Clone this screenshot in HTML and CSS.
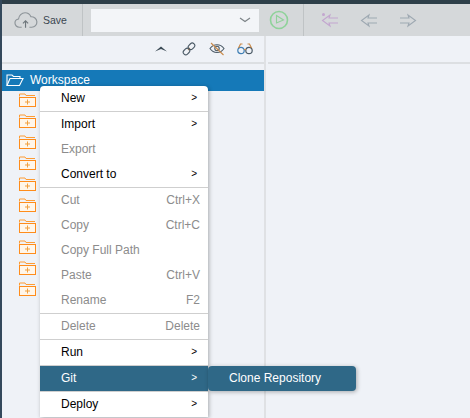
FILE: index.html
```html
<!DOCTYPE html>
<html>
    <head>
        <title>Workspace</title>
        <link rel="stylesheet" href="styles.css">
    </head>
    <body>
        <div class="topstrip"></div>
        <div class="toolbar">
            <div class="save">
                <svg class="cloud" width="25" height="18" viewBox="0 0 26 18" fill="none" stroke="#8d9499" stroke-width="1.2">
                    <path d="M8 16.5H5.5C3 16.500 1 14.500 1 12.200C1 10 2.600 8.300 4.700 8C5 4.300 8 1.500 11.500 1.500C14.300 1.500 16.600 3.200 17.600 5.600C20.800 5.400 23.500 7.700 23.800 10.800C24 14 21.600 16.500 18.500 16.500H16"/>
                    <path d="M12 17V10M9.300 12.500L12 9.800L14.700 12.500" stroke="#6f777c"/>
                </svg>
                <span>Save</span>
            </div>
            <div class="picker">
                <svg width="12" height="6" viewBox="0 0 12 6" fill="none" stroke="#7d8488" stroke-width="1.2"><path d="M1 1L6 4.500L11 1"/></svg>
            </div>
            <svg class="run" width="20" height="20" viewBox="0 0 20 20" fill="none" stroke="#8fd29a">
                <circle cx="10" cy="10" r="8.500" stroke-width="1.600"/>
                <path d="M7.500 5.500L14.500 10L7.500 13V5.500Z" stroke-width="1.100"/>
            </svg>
            <div class="nav">
                <svg width="18" height="16" viewBox="0 0 18 16" fill="none" stroke="#c3a6cf" stroke-width="1.100">
                    <circle cx="2.500" cy="2.500" r="1.500" fill="#c3a6cf" stroke="none"/>
                    <path d="M17 6H8L9 3L1.500 8.500L9 14L8 11H17"/>
                </svg>
                <svg width="18" height="16" viewBox="0 0 18 16" fill="none" stroke="#9ea9b2" stroke-width="1.100">
                    <path d="M17 6H8L9 3L1.500 8.500L9 14L8 11H17"/>
                </svg>
                <svg width="18" height="16" viewBox="0 0 18 16" fill="none" stroke="#9ea9b2" stroke-width="1.100">
                    <path d="M1 6H10L9 3L16.500 8.500L9 14L10 11H1"/>
                </svg>
            </div>
        </div>
        <div class="main">
            <div class="leftpanel">
                <div class="treetools">
                    <svg class="collapse" width="12" height="6" viewBox="0 0 12 6" fill="#3b4a55"><path d="M0 5.500L6 0.500L12 5.500L6 3Z"/></svg>
                    <svg class="link" width="14" height="14" viewBox="0 0 14 14" fill="none" stroke="#4b5a66" stroke-width="1.100">
                        <path d="M6 8L8 6" stroke="#c98a4a"/>
                        <rect x="7" y="0.800" width="5" height="7" rx="2.400" transform="rotate(45 9.500 4.300)"/>
                        <rect x="2" y="6" width="5" height="7" rx="2.400" transform="rotate(45 4.500 9.500)"/>
                    </svg>
                    <svg width="16" height="14" viewBox="0 0 16 14" fill="none" stroke="#4b5a66" stroke-width="1.100">
                        <path d="M1 6.500C3 3.800 5.500 2.800 8 2.800C10.500 2.800 13 3.800 15 6.500C13 9.500 10.500 10.500 8 10.500C5.500 10.500 3 9.500 1 6.500Z"/>
                        <circle cx="8" cy="6.500" r="2.200"/>
                        <path d="M2 1L14.500 13" stroke="#c98a4a"/>
                    </svg>
                    <svg width="16" height="12" viewBox="0 0 16 12" fill="none" stroke="#4b5a66" stroke-width="1.200">
                        <circle cx="4" cy="7.500" r="3.200" stroke="#3f7fb5"/>
                        <circle cx="12" cy="7.500" r="3.200"/>
                        <path d="M7 6.500H9M1.500 5L3.500 1H5.500M14.500 5L12.500 1H10.500" stroke="#c98a4a"/>
                    </svg>
                </div>
                <div class="workspace">
                    <svg width="18" height="13" viewBox="0 0 18 13" fill="none" stroke="#fff" stroke-width="1.100">
                        <path d="M1 11.500V1H6L7.500 2.500H14V4.500"/>
                        <path d="M1 11.500L4 4.500H17L13.500 11.500H1Z"/>
                    </svg>
                    <span>Workspace</span>
                </div>
                <div class="tree">
                    <svg class="folder" width="17" height="15" viewBox="0 0 17 15"><use href="#folder"/></svg>
                    <svg class="folder" width="17" height="15" viewBox="0 0 17 15"><use href="#folder"/></svg>
                    <svg class="folder" width="17" height="15" viewBox="0 0 17 15"><use href="#folder"/></svg>
                    <svg class="folder" width="17" height="15" viewBox="0 0 17 15"><use href="#folder"/></svg>
                    <svg class="folder" width="17" height="15" viewBox="0 0 17 15"><use href="#folder"/></svg>
                    <svg class="folder" width="17" height="15" viewBox="0 0 17 15"><use href="#folder"/></svg>
                    <svg class="folder" width="17" height="15" viewBox="0 0 17 15"><use href="#folder"/></svg>
                    <svg class="folder" width="17" height="15" viewBox="0 0 17 15"><use href="#folder"/></svg>
                    <svg class="folder" width="17" height="15" viewBox="0 0 17 15"><use href="#folder"/></svg>
                    <svg class="folder" width="17" height="15" viewBox="0 0 17 15"><use href="#folder"/></svg>
                </div>
            </div>
            <div class="rightpanel">
                <div class="rightline"></div>
            </div>
        </div>

        <div class="menu">
            <div class="item"><span>New</span><span class="arrow">&gt;</span></div>
            <div class="sep"></div>
            <div class="item"><span>Import</span><span class="arrow">&gt;</span></div>
            <div class="item off"><span>Export</span></div>
            <div class="item"><span>Convert to</span><span class="arrow">&gt;</span></div>
            <div class="sep"></div>
            <div class="item off"><span>Cut</span><span>Ctrl+X</span></div>
            <div class="item off"><span>Copy</span><span>Ctrl+C</span></div>
            <div class="item off"><span>Copy Full Path</span></div>
            <div class="item off"><span>Paste</span><span>Ctrl+V</span></div>
            <div class="item off"><span>Rename</span><span>F2</span></div>
            <div class="sep"></div>
            <div class="item off"><span>Delete</span><span>Delete</span></div>
            <div class="sep"></div>
            <div class="item"><span>Run</span><span class="arrow">&gt;</span></div>
            <div class="sep"></div>
            <div class="item active"><span>Git</span><span class="arrow">&gt;</span></div>
            <div class="sep"></div>
            <div class="item"><span>Deploy</span><span class="arrow">&gt;</span></div>
        </div>
        <div class="submenu">Clone Repository</div>

        <svg class="defs" width="0" height="0">
            <symbol id="folder" viewBox="0 0 17 15">
                <path d="M0.500 3.500V1H6L7 2.500H16" fill="none" stroke="#ff9c33"/>
                <rect x="0.500" y="4.500" width="16" height="9" fill="#fff6ea" stroke="#ff8c1a"/>
                <path d="M6 9H11M8.500 6.500V11.500" fill="none" stroke="#f0a040"/>
            </symbol>
        </svg>
    </body>
</html>
```

FILE: styles.css
```css
html,
body {
    margin: 0;
    height: 100%;
    overflow: hidden;
}
body {
    font-family: "Liberation Sans", Arial, sans-serif;
    font-size: 12px;
    background-color: #eff2f7;
    border-left: 2px solid #34495c;
    box-sizing: border-box;
    display: flex;
    flex-direction: column;
}
.topstrip {
    height: 4px;
    margin-left: -2px;
    background-color: #2e3f49;
}
.toolbar {
    height: 32px;
    background-color: #d5d8da;
    display: flex;
    align-items: center;
}
.save {
    width: 81px;
    height: 100%;
    border-right: 1px solid #bfc3c5;
    display: flex;
    align-items: center;
    gap: 4px;
    padding-left: 12px;
    box-sizing: border-box;
    color: #3a4650;
    font-size: 10.5px;
}
.picker {
    width: 168px;
    height: 23px;
    margin-left: 8px;
    background-color: #f3f5f8;
    display: flex;
    align-items: center;
    justify-content: flex-end;
    padding-right: 8px;
    box-sizing: border-box;
}
.run {
    margin-left: 10px;
}
.nav {
    height: 100%;
    margin-left: 14px;
    padding-left: 17px;
    border-left: 1px solid #bfc3c5;
    display: flex;
    align-items: center;
    gap: 21px;
    box-sizing: border-box;
}
.main {
    flex: 1;
    display: flex;
}
.leftpanel {
    width: 262px;
    border-right: 2px solid #dfe1e4;
}
.treetools {
    height: 26px;
    border-bottom: 2px solid #dcdfe2;
    display: flex;
    align-items: center;
    justify-content: flex-end;
    gap: 12px;
    padding-right: 11px;
}
.collapse {
    margin-right: 3px;
}
.link {
    margin-right: 1px;
}
.workspace {
    height: 21px;
    margin-top: 6px;
    background-color: #1579b8;
    color: #fff;
    display: flex;
    align-items: center;
    gap: 6px;
    padding-left: 4px;
}
.workspace span {
    margin-bottom: 2px;
}
.tree {
    padding: 2px 0 0 17px;
    display: flex;
    flex-direction: column;
    gap: 6px;
}
.folder {
    display: block;
}
.rightpanel {
    flex: 1;
    padding: 26px 0 0 2px;
}
.rightline {
    height: 2px;
    background-color: #dcdfe2;
}
.menu {
    position: absolute;
    left: 40px;
    top: 86px;
    width: 168px;
    background-color: #fff;
    border-radius: 4px 4px 0 0;
    box-shadow: 1px 1px 4px rgba(0, 0, 0, 0.3);
}
.item {
    height: 25px;
    padding: 0 8px 2px 21px;
    box-sizing: border-box;
    display: flex;
    align-items: center;
    justify-content: space-between;
    color: #000;
}
.item.off {
    color: #8c8c8c;
}
.item.active {
    background-color: #2f6887;
    color: #fff;
}
.arrow {
    margin-right: 3px;
    font-size: 10px;
}
.sep {
    height: 1px;
    background-color: #cfcfcf;
}
.submenu {
    position: absolute;
    left: 208px;
    top: 366px;
    width: 148px;
    height: 25px;
    line-height: 25px;
    padding-left: 21px;
    box-sizing: border-box;
    background-color: #2f6887;
    color: #fff;
    border-radius: 4px;
    box-shadow: 1px 1px 4px rgba(0, 0, 0, 0.3);
}
.defs {
    position: absolute;
}
```
